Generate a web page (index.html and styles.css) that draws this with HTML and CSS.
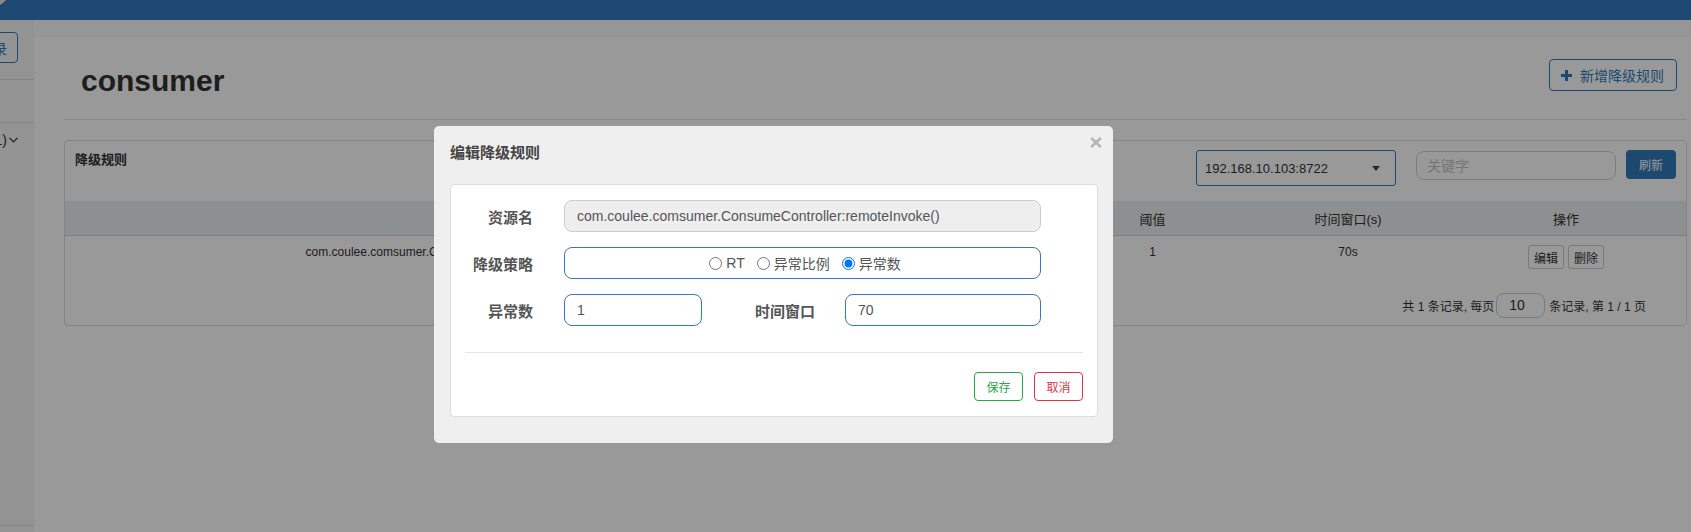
FILE: index.html
```html
<!DOCTYPE html>
<html lang="zh-CN">
<head>
<meta charset="utf-8">
<title>降级规则</title>
<link rel="stylesheet" href="styles.css">
</head>
<body>
<div class="topbar"><svg class="corner" width="6" height="5" viewBox="0 0 6 5"><polygon points="0,0 6,0 3,3 0,5" fill="#e6e6e6"/></svg></div>
<div class="layout">
  <aside class="sidebar">
    <div class="side-inner">
      <div class="side-search"><button class="side-btn">查询记录</button></div>
      <div class="side-gap"></div>
      <div class="side-menu">
        <div class="side-item"><span>consumer (1)</span><svg class="chev" width="9" height="6" viewBox="0 0 9 6"><polyline points="0.5,0.8 4.5,4.8 8.5,0.8" fill="none" stroke="#333" stroke-width="1.2"/></svg></div>
      </div>
      <div class="side-foot"></div>
    </div>
  </aside>
  <main class="main">
    <div class="content">
      <div class="page-header">
        <h1 class="title">consumer</h1>
        <button class="btn-add"><svg class="plus" width="11" height="11" viewBox="0 0 11 11"><rect x="4" y="0" width="3" height="11" fill="#337ab7"/><rect x="0" y="4" width="11" height="3" fill="#337ab7"/></svg><span>新增降级规则</span></button>
      </div>
      <div class="panel">
        <div class="panel-heading">
          <span class="panel-title">降级规则</span>
          <div class="toolbar">
            <div class="select"><span>192.168.10.103:8722</span><span class="caret"></span></div>
            <input class="search" type="text" placeholder="关键字">
            <button class="btn-refresh">刷新</button>
          </div>
        </div>
        <table class="rules">
          <colgroup>
            <col class="c-res"><col class="c-grade"><col class="c-count"><col class="c-win"><col class="c-op">
          </colgroup>
          <thead>
            <tr><th>资源名</th><th>降级策略</th><th>阈值</th><th>时间窗口(s)</th><th class="op">操作</th></tr>
          </thead>
          <tbody>
            <tr>
              <td>com.coulee.comsumer.ConsumeController:remoteInvoke()</td>
              <td>异常数</td>
              <td>1</td>
              <td>70s</td>
              <td class="op"><div class="ops"><button class="btn-sm">编辑</button><button class="btn-sm">删除</button></div></td>
            </tr>
          </tbody>
        </table>
        <div class="pager">
          <span>共 1 条记录, 每页</span>
          <input class="page-size" type="text" value="10">
          <span>条记录, 第 1 / 1 页</span>
        </div>
      </div>
    </div>
  </main>
</div>

<div class="backdrop"></div>
<div class="dialog">
  <svg class="close" width="12" height="11" viewBox="0 0 12 11"><line x1="1.2" y1="1" x2="10.8" y2="10" stroke="#b4b4b4" stroke-width="2.6"/><line x1="10.8" y1="1" x2="1.2" y2="10" stroke="#b4b4b4" stroke-width="2.6"/></svg>
  <div class="dialog-title">编辑降级规则</div>
  <div class="card">
    <div class="row">
      <label class="lbl">资源名</label>
      <input class="ctl w-full ro" type="text" value="com.coulee.comsumer.ConsumeController:remoteInvoke()" readonly>
    </div>
    <div class="row">
      <label class="lbl">降级策略</label>
      <div class="ctl w-full radios">
        <label class="radio"><input type="radio" name="grade">RT</label>
        <label class="radio"><input type="radio" name="grade">异常比例</label>
        <label class="radio"><input type="radio" name="grade" checked>异常数</label>
      </div>
    </div>
    <div class="row last">
      <label class="lbl">异常数</label>
      <input class="ctl w-small" type="text" value="1">
      <label class="lbl lbl-wide">时间窗口</label>
      <input class="ctl w-mid" type="text" value="70">
    </div>
    <hr class="divider">
    <div class="actions">
      <button class="btn-o btn-save">保存</button>
      <button class="btn-o btn-cancel">取消</button>
    </div>
  </div>
</div>
</body>
</html>
```

FILE: styles.css
```css
html, body {
  margin: 0;
  padding: 0;
}
body {
  width: 1691px;
  height: 532px;
  overflow: hidden;
  position: relative;
  font-family: "Liberation Sans", "Noto Sans CJK SC", sans-serif;
  font-size: 13px;
  color: #333;
  background: #fff;
}
button, input {
  font-family: "Liberation Sans", "Noto Sans CJK SC", sans-serif;
}

.topbar {
  height: 20px;
  background: #347bbe;
}
.corner {
  display: block;
}

.layout {
  display: flex;
  height: 512px;
}

/* sidebar */
.sidebar {
  width: 34px;
  flex: none;
  background: #f5f5f5;
  overflow: hidden;
}
.side-inner {
  width: 200px;
  margin-left: -166px;
  height: 100%;
  display: flex;
  flex-direction: column;
}
.side-search {
  display: flex;
  justify-content: flex-end;
  padding: 12px 16px 16px 0;
  border-bottom: 1px solid #ddd;
}
.side-btn {
  height: 31px;
  padding: 0 10px;
  border: 1px solid #337ab7;
  border-radius: 4px;
  background: transparent;
  color: #337ab7;
  font-size: 14px;
}
.side-gap {
  height: 42px;
  border-bottom: 1px solid #ddd;
}
.side-menu {
  flex: 1;
  border-bottom: 1px solid #ddd;
}
.side-item {
  display: flex;
  justify-content: flex-end;
  align-items: center;
  gap: 2px;
  padding: 8px 16px 0 0;
  line-height: 18px;
  font-size: 14px;
}
.side-foot {
  height: 6px;
}

/* main */
.main {
  flex: 1;
  background: #fafafa;
  padding-top: 17px;
  display: flex;
  flex-direction: column;
}
.content {
  flex: 1;
  background: #fff;
  padding: 0 4px 0 30px;
}
.page-header {
  display: flex;
  justify-content: space-between;
  align-items: flex-start;
  height: 83px;
  box-sizing: border-box;
  border-bottom: 1px solid #e3e3e3;
}
.title {
  margin: 26px 0 0 17px;
  font-size: 30px;
  line-height: 36px;
  font-weight: bold;
  color: #333;
}
.btn-add {
  margin: 22px 10px 0 0;
  height: 32px;
  width: 128px;
  box-sizing: border-box;
  display: flex;
  align-items: center;
  gap: 8px;
  padding: 0 0 0 11px;
  border: 1px solid #337ab7;
  border-radius: 4px;
  background: #fff;
  color: #337ab7;
  font-size: 14px;
}
.plus {
  flex: none;
}

/* panel */
.panel {
  margin-top: 20px;
  border: 1px solid #ddd;
  border-radius: 4px;
  overflow: hidden;
}
.panel-heading {
  height: 60px;
  box-sizing: border-box;
  padding: 9px 10px 0;
  display: flex;
  justify-content: space-between;
  align-items: flex-start;
}
.panel-title {
  font-size: 13px;
  font-weight: bold;
  line-height: 20px;
}
.toolbar {
  display: flex;
  align-items: flex-start;
}
.select {
  width: 200px;
  height: 36px;
  box-sizing: border-box;
  border: 1px solid #337ab7;
  border-radius: 3px;
  display: flex;
  align-items: center;
  justify-content: space-between;
  padding: 0 15px 0 8px;
  font-size: 13px;
  background: #fff;
}
.caret {
  width: 0;
  height: 0;
  border-left: 4.5px solid transparent;
  border-right: 4.5px solid transparent;
  border-top: 5px solid #444;
}
.search {
  margin: 1px 0 0 20px;
  width: 200px;
  height: 29px;
  box-sizing: border-box;
  border: 1px solid #d0d0d0;
  border-radius: 8px;
  padding: 0 10px;
  font-size: 14px;
  outline: none;
}
.search::placeholder {
  color: #c4c4c4;
}
.btn-refresh {
  margin-left: 10px;
  width: 50px;
  height: 29px;
  border: 0;
  border-radius: 4px;
  background: #337ab7;
  color: #fff;
  font-size: 12px;
  padding: 0;
}

/* table */
.rules {
  width: 100%;
  border-collapse: collapse;
  table-layout: fixed;
}
.c-res { width: 792px; }
.c-grade { width: 204px; }
.c-count { width: 183px; }
.c-win { width: 208px; }
.rules th {
  height: 34px;
  padding: 0;
  background: #edeef0;
  border-bottom: 1px solid #d0d0d0;
  font-weight: normal;
  font-size: 13px;
  text-align: center;
}
.rules tbody tr {
  height: 44px;
}
.rules td {
  padding: 8px 0 0;
  text-align: center;
  vertical-align: top;
  font-size: 12px;
  line-height: 17px;
  white-space: nowrap;
}
.rules .op {
  padding-right: 6px;
}
.ops {
  display: flex;
  justify-content: center;
  gap: 4px;
  padding-top: 1px;
}
.btn-sm {
  height: 24px;
  padding: 0 5px;
  border: 1px solid #ccc;
  border-radius: 3px;
  background: #fff;
  color: #333;
  font-size: 12px;
}

.pager {
  display: flex;
  justify-content: flex-end;
  align-items: center;
  padding: 13px 40px 7px 0;
  font-size: 12px;
}
.page-size {
  width: 49px;
  height: 25px;
  box-sizing: border-box;
  margin: 0 4px 0 2px;
  padding: 0 0 0 12px;
  border: 1px solid #ccc;
  border-radius: 8px;
  font-size: 14px;
  color: #333;
}

/* modal */
.backdrop {
  position: fixed;
  inset: 0;
  background: rgba(0, 0, 0, 0.4);
}
.dialog {
  position: absolute;
  left: 434px;
  top: 126px;
  width: 679px;
  box-sizing: border-box;
  padding: 17px 15px 26px 16px;
  background: #efefef;
  border-radius: 5px;
}
.close {
  position: absolute;
  top: 11px;
  right: 11px;
}
.dialog-title {
  margin: 0 0 21px;
  font-size: 15px;
  line-height: 20px;
  font-weight: bold;
  color: #444;
}
.card {
  background: #fff;
  border: 1px solid #ddd;
  border-radius: 4px;
  padding: 15px 14px;
}
.row {
  display: flex;
  align-items: center;
  height: 32px;
  margin-bottom: 15px;
}
.row.last {
  margin-bottom: 0;
}
.lbl {
  flex: none;
  width: 68px;
  margin-right: 31px;
  text-align: right;
  font-size: 15px;
  font-weight: bold;
  color: #555;
}
.lbl-wide {
  width: 113px;
  margin-right: 30px;
}
.ctl {
  flex: none;
  height: 32px;
  box-sizing: border-box;
  border: 1px solid #3779bb;
  border-radius: 8px;
  padding: 0 12px;
  font-size: 14px;
  color: #555;
  background: #fff;
  outline: none;
}
.ctl.ro {
  background: #eee;
  border-color: #ccc;
}
.w-full { width: 477px; }
.w-small { width: 138px; }
.w-mid { width: 196px; }
.radios {
  display: flex;
  justify-content: center;
  align-items: center;
  gap: 7px;
  padding: 0;
}
.radio {
  display: inline-flex;
  align-items: center;
  font-size: 14px;
  color: #555;
}
.radio input {
  margin: 0 4px 0 5px;
  width: 13px;
  height: 13px;
}
.divider {
  margin: 26px 0 0;
  border: 0;
  border-top: 1px solid #e5e5e5;
  height: 0;
}
.actions {
  display: flex;
  justify-content: flex-end;
  gap: 11px;
  margin-top: 19px;
}
.btn-o {
  width: 49px;
  height: 29px;
  padding: 0;
  border: 1px solid;
  border-radius: 4px;
  background: #fff;
  font-size: 12px;
}
.btn-save {
  border-color: #28a745;
  color: #28a745;
}
.btn-cancel {
  border-color: #dc3545;
  color: #dc3545;
}
```
